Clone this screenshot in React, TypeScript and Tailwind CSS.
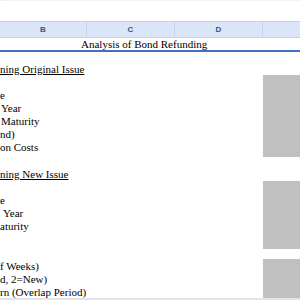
import React from "react";

type Row = { text: string; underline?: boolean; pad?: number; tall?: boolean };

const rows: Row[] = [
  { text: "ning Original Issue", underline: true },
  { text: "" },
  { text: "e" },
  { text: "Year", pad: 1 },
  { text: "Maturity", pad: 1 },
  { text: "nd)" },
  { text: "on Costs", tall: true },
  { text: "" },
  { text: "ning New Issue", underline: true },
  { text: "" },
  { text: "e" },
  { text: "Year", pad: 3 },
  { text: "aturity", tall: true },
  { text: "" },
  { text: "" },
  { text: "f Weeks)" },
  { text: "d, 2=New)" },
  { text: "rn (Overlap Period)" },
];

export default function App() {
  return (
    <div className="w-[300px] h-[300px] overflow-hidden bg-white flex flex-col" style={{ fontFamily: '"Liberation Serif", serif' }}>
      {/* strip above the sheet */}
      <div className="h-[21px] shrink-0 border-t border-dotted border-[#e4e8ee]" />

      {/* column headers */}
      <div className="h-[17px] shrink-0 flex bg-[#dae5f8] border-y border-[#c3d0e6] text-[8px] font-bold text-[#3b5378]" style={{ fontFamily: '"Liberation Sans", sans-serif' }}>
        <div className="w-[87px] shrink-0 flex items-center justify-center border-r border-[#c6d3ea]">B</div>
        <div className="w-[88px] shrink-0 flex items-center justify-center border-r border-[#c6d3ea]">C</div>
        <div className="w-[88px] shrink-0 flex items-center justify-center border-r border-[#c6d3ea]">D</div>
        <div className="flex-1" />
      </div>

      {/* title row */}
      <div className="h-[14px] shrink-0 border-b-2 border-[#3f6fc6] pl-[81px] text-[11px] leading-[13px] text-black">
        Analysis of Bond Refunding
      </div>

      <div className="flex-1 flex min-h-0">
        {/* labels, columns A–D */}
        <div className="w-[263px] shrink-0 flex flex-col pt-[11px]">
          {rows.map((r, i) => (
            <div
              key={i}
              className={`${r.tall ? "h-[14px]" : "h-[13px]"} shrink-0 text-[11px] leading-[13px] text-black whitespace-nowrap`}
              style={{ paddingLeft: r.pad ?? 0 }}
            >
              <span className={r.underline ? "underline underline-offset-[1px]" : ""}>{r.text}</span>
            </div>
          ))}
        </div>

        {/* column E input cells */}
        <div className="flex-1 flex flex-col">
          <div className="h-[23px] shrink-0" />
          <div className="h-[82px] shrink-0 bg-[#c0c0c0]" />
          <div className="h-[24px] shrink-0" />
          <div className="h-[68px] shrink-0 bg-[#c0c0c0]" />
          <div className="h-[10px] shrink-0" />
          <div className="flex-1 bg-[#c0c0c0]" />
        </div>
      </div>
      <div className="h-[2px] shrink-0 bg-[#e3e3e3]" />
    </div>
  );
}
